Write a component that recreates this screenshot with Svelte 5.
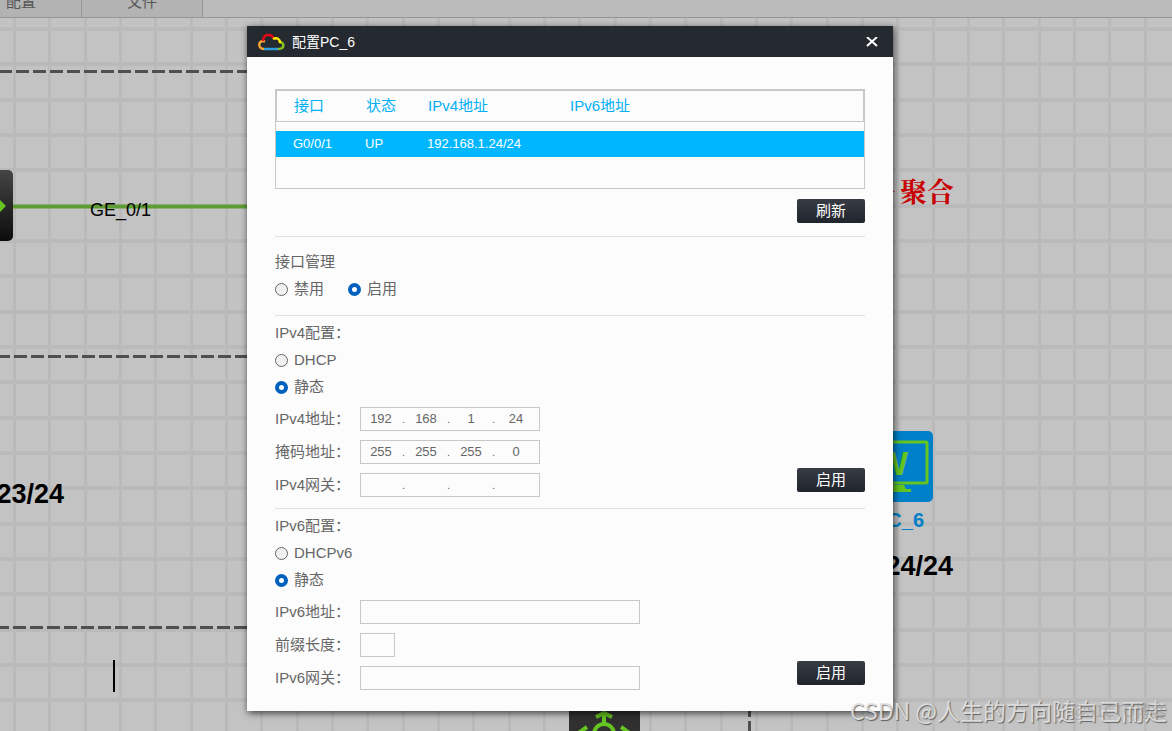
<script>
  let adminState = $state('up');
  let ipv4Mode = $state('static');
  let ipv6Mode = $state('static');

  const interfaces = [
    { name: 'G0/0/1', status: 'UP', ipv4: '192.168.1.24/24', ipv6: '' }
  ];

  let ipv4Rows = $state([
    { label: 'IPv4地址', octets: ['192', '168', '1', '24'] },
    { label: '掩码地址', octets: ['255', '255', '255', '0'] },
    { label: 'IPv4网关', octets: ['', '', '', ''] }
  ]);

  let ipv6Rows = $state([
    { id: 'ipv6-address', label: 'IPv6地址', value: '', short: false },
    { id: 'ipv6-prefix', label: '前缀长度', value: '', short: true },
    { id: 'ipv6-gateway', label: 'IPv6网关', value: '', short: false }
  ]);

  // canvas grid, three cells are 106px
  const gridLines = Array.from({ length: 80 }, (_, i) => Math.round((i * 106) / 3));
</script>

<div class="page">
  <nav class="toolbar">
    <button class="tab">配置</button>
    <button class="tab">文件</button>
  </nav>

  <div class="canvas">
    <svg class="topology" aria-hidden="true">
      <defs>
        <linearGradient id="device" x1="0" y1="0" x2="0" y2="1">
          <stop offset="0" stop-color="#454545" />
          <stop offset="1" stop-color="#0c0c0c" />
        </linearGradient>
      </defs>

      {#each gridLines as pos}
        <rect x={pos + 13} y="0" width="3" height="100%" fill="#bababa" />
        <rect x="0" y={pos + 9} width="100%" height="4" fill="#bababa" />
      {/each}

      <g stroke="#4f4f4f" stroke-width="3" stroke-dasharray="13 4">
        <path d="M-1 53.5H700" />
        <path d="M-3 338.5H700" />
        <path d="M-4 609.5H700" />
        <path d="M749.5 500V900" stroke-dashoffset="1" />
      </g>

      <path d="M0 188.500H700" stroke="#5e9d33" stroke-width="4" />
      <rect x="-58" y="152" width="71" height="71" rx="5" fill="url(#device)" />
      <path d="M0 182L6 188L0 194Z" fill="#65c41f" />
      <text x="90" y="198" class="port">GE_0/1</text>

      <text x="64" y="485" class="address" text-anchor="end">23/24</text>
      <rect x="113" y="642" width="2" height="32" />

      <text x="895" y="184" class="note" text-anchor="end">链路</text>
      <text x="954" y="184" class="note" text-anchor="end">聚合</text>

      <rect x="863" y="413" width="70" height="71" rx="5" fill="#0080c8" />
      <rect x="869" y="424" width="58" height="41" rx="1" fill="none" stroke="#65c41f" stroke-width="3" />
      <text x="908" y="457" class="screen" text-anchor="end">W</text>
      <path d="M890 467H904L906 471H911V474H885V471H890Z" fill="#65c41f" />
      <text x="924" y="509" class="device-name" text-anchor="end">PC_6</text>
      <text x="953" y="557" class="address" text-anchor="end">24/24</text>

      <rect x="569" y="680" width="71" height="71" rx="5" fill="#303030" />
      <g fill="none" stroke="#65c41f" stroke-width="4">
        <circle cx="604" cy="716" r="10" />
        <path d="M604 706V695M596 699L604 695L612 699" />
        <path d="M587 709L580 714V719M621 709L628 714V719" />
      </g>
    </svg>

    <section class="dialog" role="dialog" aria-labelledby="dialog-title">
      <header class="titlebar">
        <svg class="logo" viewBox="0 0 28 18" fill="none" stroke-width="2.5" aria-hidden="true">
          <path d="M8 8.500C1 6 0 16 7 16" stroke="#f3a536" />
          <path d="M22 9C28 9 28 16 21 16" stroke="#8cc220" />
          <path d="M6 8C6 1 14 0 17 5.500" stroke="#e30613" />
          <path d="M16 6C20 4 23 6 23 10" stroke="#ffed00" />
          <path d="M7 16H21" stroke="#2f9edb" />
        </svg>
        <h1 id="dialog-title">配置PC_6</h1>
        <button class="close" aria-label="关闭">
          <svg viewBox="0 0 13 10" stroke="#fff" stroke-width="2" aria-hidden="true">
            <path d="M1 0L11 9M11 0L1 9" />
          </svg>
        </button>
      </header>

      <form class="body" onsubmit={(event) => event.preventDefault()}>
        <div class="group interfaces">
          <div class="table-box">
            <table>
              <thead>
                <tr>
                  <th class="col-name">接口</th>
                  <th class="col-status">状态</th>
                  <th class="col-ipv4">IPv4地址</th>
                  <th>IPv6地址</th>
                </tr>
              </thead>
              <tbody>
                {#each interfaces as row}
                  <tr>
                    <td>{row.name}</td>
                    <td>{row.status}</td>
                    <td>{row.ipv4}</td>
                    <td>{row.ipv6}</td>
                  </tr>
                {/each}
              </tbody>
            </table>
          </div>
          <button class="action">刷新</button>
        </div>

        <div class="group admin">
          <h2>接口管理</h2>
          <div class="inline">
            <label class="choice"><input type="radio" name="admin" value="down" bind:group={adminState} />禁用</label>
            <label class="choice"><input type="radio" name="admin" value="up" bind:group={adminState} />启用</label>
          </div>
        </div>

        <div class="group split">
          <div class="fields">
            <h2>IPv4配置：</h2>
            <div class="modes">
              <label class="choice"><input type="radio" name="ipv4" value="dhcp" bind:group={ipv4Mode} />DHCP</label>
              <label class="choice"><input type="radio" name="ipv4" value="static" bind:group={ipv4Mode} />静态</label>
            </div>
            {#each ipv4Rows as row, r}
              <div class="field">
                <label for="ipv4-{r}-0">{row.label}：</label>
                <div class="octets">
                  {#each row.octets as _, i}
                    {#if i > 0}<span>.</span>{/if}
                    <input id="ipv4-{r}-{i}" type="text" maxlength="3" aria-label="{row.label} {i + 1}" bind:value={row.octets[i]} />
                  {/each}
                </div>
              </div>
            {/each}
          </div>
          <button class="action">启用</button>
        </div>

        <div class="group split">
          <div class="fields">
            <h2>IPv6配置：</h2>
            <div class="modes">
              <label class="choice"><input type="radio" name="ipv6" value="dhcp" bind:group={ipv6Mode} />DHCPv6</label>
              <label class="choice"><input type="radio" name="ipv6" value="static" bind:group={ipv6Mode} />静态</label>
            </div>
            {#each ipv6Rows as row}
              <div class="field">
                <label for={row.id}>{row.label}：</label>
                <input id={row.id} class="text" class:short={row.short} type="text" bind:value={row.value} />
              </div>
            {/each}
          </div>
          <button class="action">启用</button>
        </div>
      </form>
    </section>
  </div>

  <div class="watermark">CSDN @人生的方向随自己而走</div>
  <div class="watermark site">@51CTO博客</div>
</div>

<style>
  :global(body) {
    margin: 0;
  }

  .page {
    display: flex;
    flex-direction: column;
    height: 100vh;
    position: relative;
    overflow: hidden;
    font-family: "Liberation Sans", "Noto Sans CJK SC", sans-serif;
    font-size: 15px;
    color: #666;
  }

  button,
  input {
    font: inherit;
    color: inherit;
    margin: 0;
    padding: 0;
    border: 0;
    box-sizing: border-box;
  }

  /* toolbar is scrolled partly out of view */
  .toolbar {
    display: flex;
    flex: none;
    height: 17px;
    margin-left: -39px;
    background: #bbb;
    border-bottom: 1px solid #959595;
  }
  .tab {
    width: 121px;
    padding-bottom: 14px;
    line-height: 3px;
    background: #b3b3b3;
    border-right: 1px solid #969696;
    color: #555;
  }

  .canvas {
    flex: 1;
    position: relative;
    background: #c3c3c3;
  }
  .topology {
    position: absolute;
    width: 100%;
    height: 100%;
  }
  .port {
    font-size: 18px;
    fill: #000;
  }
  .address {
    font-size: 27px;
    font-weight: 700;
    fill: #000;
  }
  .note {
    font-family: "Liberation Serif", "Noto Serif CJK SC", "Noto Sans CJK SC", serif;
    font-size: 27px;
    font-weight: 700;
    fill: #c80000;
  }
  .screen {
    font-size: 34px;
    font-weight: 700;
    fill: #65c41f;
  }
  .device-name {
    font-size: 20px;
    font-weight: 700;
    fill: #0080c8;
  }

  /* floating config window */
  .dialog {
    position: absolute;
    left: 247px;
    top: 8px;
    width: 646px;
    background: #fcfcfc;
    box-shadow: 1px 2px 7px rgba(0, 0, 0, 0.7);
  }
  .titlebar {
    display: flex;
    align-items: center;
    height: 31px;
    padding: 0 14px 0 10px;
    box-sizing: border-box;
    background: #252930;
    color: #fff;
  }
  .logo {
    width: 28px;
    height: 18px;
  }
  h1 {
    flex: 1;
    margin: 0 0 0 7px;
    font-size: 14px;
    font-weight: 400;
    line-height: 24px;
  }
  .close {
    display: flex;
    background: none;
  }
  .close svg {
    width: 13px;
    height: 10px;
  }

  .body {
    padding: 32px 28px 10px;
  }
  .group {
    padding: 4px 0 11px;
    border-bottom: 1px solid #e0e0e0;
  }
  .group:last-child {
    border-bottom: 0;
  }
  .group.interfaces {
    display: flex;
    flex-direction: column;
    align-items: flex-end;
    gap: 10px;
    padding: 0 0 13px;
  }
  .group.admin {
    padding: 12px 0 14px;
  }

  .table-box {
    width: 100%;
    height: 100px;
    box-sizing: border-box;
    border: 1px solid #c8c8c8;
  }
  table {
    width: 100%;
    table-layout: fixed;
    border-spacing: 0;
  }
  thead tr {
    outline: 1px solid #c8c8c8;
    outline-offset: -1px;
  }
  th,
  td {
    padding: 0 0 0 17px;
    text-align: left;
    font-weight: 400;
    line-height: 24px;
  }
  th {
    height: 32px;
    padding-left: 18px;
    color: #00b0f5;
  }
  .col-name {
    width: 54px;
  }
  .col-status {
    width: 44px;
  }
  .col-ipv4 {
    width: 124px;
  }
  tbody::before {
    content: "";
    display: block;
    height: 9px;
  }
  td {
    height: 26px;
    background: #00b7ff;
    color: #fff;
    font-size: 13px;
  }

  .action {
    flex: none;
    width: 68px;
    height: 24px;
    border-radius: 2px;
    background: linear-gradient(#383c45, #20242c);
    color: #fff;
    line-height: 24px;
  }

  h2 {
    margin: 0 0 2px;
    font-size: 15px;
    font-weight: 400;
    line-height: 26px;
  }
  .inline {
    display: flex;
    gap: 24px;
  }
  .choice {
    display: flex;
    align-items: center;
    gap: 6px;
    height: 24px;
    line-height: 24px;
  }
  .choice input {
    appearance: none;
    width: 13px;
    height: 13px;
    border: 1px solid #666;
    border-radius: 50%;
    background: #f0f0f0;
  }
  .choice input:checked {
    border: 4px solid #0060bd;
    background: #fff;
  }

  .split {
    display: flex;
    justify-content: space-between;
    align-items: flex-end;
  }
  .split .action {
    margin-bottom: 5px;
  }
  .modes {
    display: flex;
    flex-direction: column;
    gap: 3px;
    margin-bottom: 8px;
  }
  .field {
    display: flex;
    align-items: center;
    height: 24px;
    line-height: 24px;
  }
  .field + .field {
    margin-top: 9px;
  }
  .field label {
    width: 85px;
    white-space: nowrap;
  }
  .octets {
    display: flex;
    align-items: center;
    width: 180px;
    height: 24px;
    box-sizing: border-box;
    border: 1px solid #c8c8c8;
    font-size: 13px;
  }
  .octets input {
    width: 40px;
    height: 22px;
    background: none;
    text-align: center;
  }
  .octets span {
    width: 5px;
    font-size: 11px;
    text-align: center;
  }
  .text {
    width: 280px;
    height: 24px;
    padding: 0 6px;
    background: none;
    border: 1px solid #c8c8c8;
    font-size: 13px;
  }
  .text.short {
    width: 35px;
  }

  .watermark {
    position: absolute;
    right: 5px;
    bottom: 5px;
    font-family: "Noto Sans CJK SC", sans-serif;
    font-size: 23px;
    line-height: 32px;
    color: rgba(228, 228, 228, 0.9);
    text-shadow: 1px 1px 1px rgba(0, 0, 0, 0.5);
    pointer-events: none;
  }
  .watermark.site {
    font-size: 16px;
    color: rgba(150, 150, 150, 0.6);
    text-shadow: none;
  }
</style>
